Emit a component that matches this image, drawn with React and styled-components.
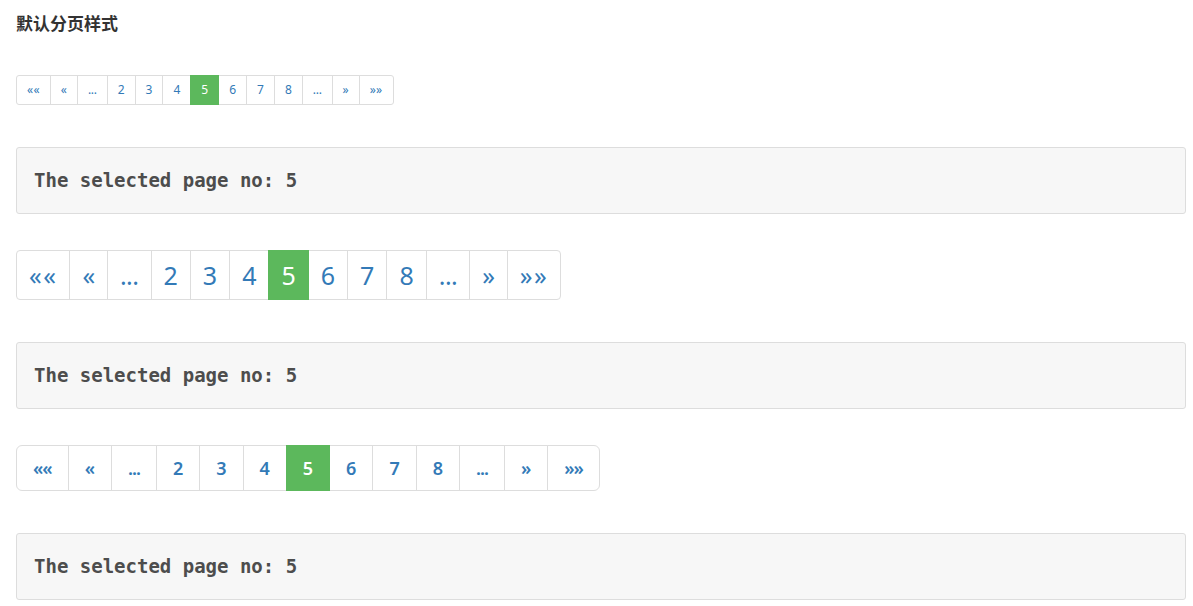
import React, { useState } from "react";
import styled, { createGlobalStyle, css } from "styled-components";

const GlobalStyle = createGlobalStyle`
  * { box-sizing: border-box; }
  body {
    margin: 0;
    background: #fff;
    font-family: "Noto Sans", "Noto Sans CJK SC", sans-serif;
    color: #333;
  }
`;

const Page = styled.div`
  width: 1170px;
  margin-left: 16px;
  display: flex;
  flex-direction: column;
  align-items: flex-start;
`;

const Title = styled.h4`
  margin: 12px 0 0;
  font-family: "Noto Sans CJK SC", sans-serif;
  font-size: 17px;
  font-weight: 700;
  line-height: 22px;
  color: #333;
`;

/* per-size metrics; spacing tweaks the width of arrow / ellipsis glyphs */
const sizes = {
  sm: { font: 12, line: 18, pad: "5px 10px", radius: 3, weight: 400, spacing: { edge: 0.3, step: 0, gap: -0.3, num: 0 } },
  xl: { font: 25, line: 36, pad: "6px 12px", radius: 4, weight: 400, spacing: { edge: 1.5, step: -0.3, gap: -0.5, num: 0 } },
  lg: { font: 18, line: 24, pad: "10px 16px", radius: 6, weight: 600, spacing: { edge: -1, step: 0, gap: -1, num: 0 } },
};

const List = styled.ul`
  display: flex;
  list-style: none;
  padding: 0;
  margin: ${(p) => p.$top}px 0 0;
`;

const Item = styled.li`
  display: block;
  & + & { margin-left: -1px; }
`;

const Link = styled.a`
  display: block;
  position: relative;
  padding: ${(p) => sizes[p.$size].pad};
  font-size: ${(p) => sizes[p.$size].font}px;
  line-height: ${(p) => sizes[p.$size].line}px;
  font-weight: ${(p) => sizes[p.$size].weight};
  letter-spacing: ${(p) => sizes[p.$size].spacing[p.$kind]}px;
  color: #337ab7;
  background: #fff;
  border: 1px solid #ddd;
  text-decoration: none;
  cursor: pointer;
  ${(p) =>
    p.$first &&
    css`
      border-top-left-radius: ${sizes[p.$size].radius}px;
      border-bottom-left-radius: ${sizes[p.$size].radius}px;
    `}
  ${(p) =>
    p.$last &&
    css`
      border-top-right-radius: ${sizes[p.$size].radius}px;
      border-bottom-right-radius: ${sizes[p.$size].radius}px;
    `}
  ${(p) =>
    p.$active &&
    css`
      z-index: 2;
      color: #fff;
      background: #5cb85c;
      border-color: #5cb85c;
    `}
`;

const Output = styled.pre`
  width: 100%;
  margin: ${(p) => p.$top}px 0 0;
  padding: 18px 17px;
  font-family: "DejaVu Sans Mono", "Liberation Mono", monospace;
  font-size: 19px;
  font-weight: 700;
  line-height: 29px;
  color: #4d4d4d;
  background: #f7f7f7;
  border: 1px solid #ddd;
  border-radius: 3px;
`;

function Pagination({ size, current, onChange, top }) {
  const items = [
    { label: "««", go: 1, kind: "edge" },
    { label: "«", go: Math.max(1, current - 1), kind: "step" },
    { label: "...", go: Math.max(1, current - 4), kind: "gap" },
    ...[2, 3, 4, 5, 6, 7, 8].map((n) => ({ label: String(n), go: n, kind: "num" })),
    { label: "...", go: current + 4, kind: "gap" },
    { label: "»", go: current + 1, kind: "step" },
    { label: "»»", go: 10, kind: "edge" },
  ];
  return (
    <List $top={top}>
      {items.map((it, i) => (
        <Item key={i}>
          <Link
            $size={size}
            $kind={it.kind}
            $first={i === 0}
            $last={i === items.length - 1}
            $active={it.label === String(current)}
            onClick={() => onChange(it.go)}
          >
            {it.label}
          </Link>
        </Item>
      ))}
    </List>
  );
}

export default function App() {
  const [a, setA] = useState(5);
  const [b, setB] = useState(5);
  const [c, setC] = useState(5);
  return (
    <>
      <GlobalStyle />
      <Page>
        <Title>默认分页样式</Title>
        <Pagination size="sm" current={a} onChange={setA} top={41} />
        <Output $top={42}>The selected page no: {a}</Output>
        <Pagination size="xl" current={b} onChange={setB} top={36} />
        <Output $top={42}>The selected page no: {b}</Output>
        <Pagination size="lg" current={c} onChange={setC} top={36} />
        <Output $top={42}>The selected page no: {c}</Output>
      </Page>
    </>
  );
}
